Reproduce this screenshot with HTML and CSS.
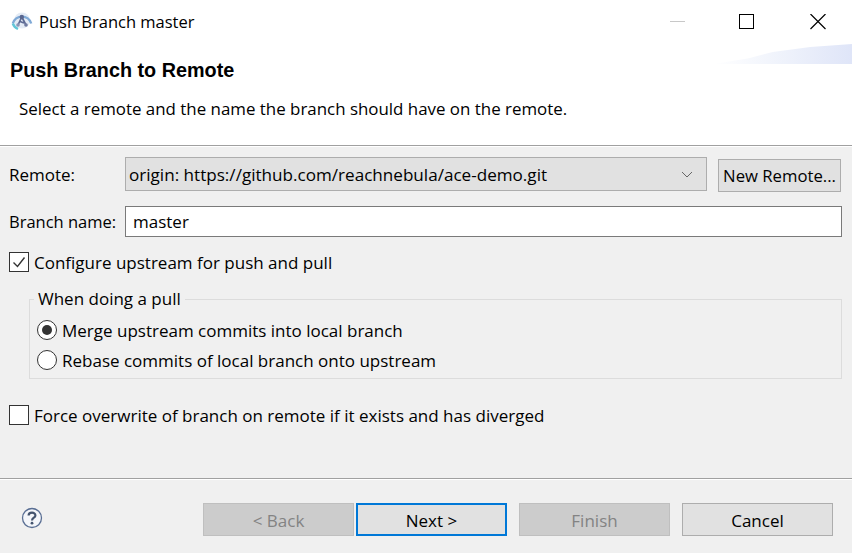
FILE: index.html
```html
<!DOCTYPE html>
<html lang="en">
<head>
<meta charset="utf-8">
<title>Push Branch master</title>
<link rel="stylesheet" href="styles.css">
</head>
<body>
<div class="dialog">
  <div class="top">
    <div class="titlebar">
      <svg class="appicon" width="22" height="22" viewBox="0 0 22 22">
        <circle cx="11" cy="11.5" r="8" fill="#e4ebf5"/>
        <path d="M1.8 14.5 A9.6 9.6 0 0 1 20.2 14.5" fill="none" stroke="#7fa9d6" stroke-width="2.4"/>
        <path d="M1.8 14.5 A9.6 9.6 0 0 0 7 20" fill="none" stroke="#63c6d8" stroke-width="2.4"/>
        <path d="M7 16 L10.8 8 L15 16 M9 12.5 L13 14" fill="none" stroke="#5d6a94" stroke-width="1.7"/>
        <circle cx="10.8" cy="8" r="2.2" fill="#59668f"/>
        <circle cx="7" cy="16" r="1.8" fill="#8a93b4"/>
        <circle cx="15" cy="16" r="1.8" fill="#6f7aa0"/>
      </svg>
      <span class="wintitle">Push Branch master</span>
      <div class="winbtns">
        <svg width="16" height="16" viewBox="0 0 16 16"><path d="M0 7.5H15" stroke="#c8c8c8" stroke-width="1"/></svg>
        <svg width="16" height="16" viewBox="0 0 16 16"><rect x="1.5" y="0.5" width="14" height="14" fill="none" stroke="#000" stroke-width="1"/></svg>
        <svg class="closeicon" width="16" height="16" viewBox="0 0 16 16"><path d="M0.5 0L15.5 15M15.5 0L0.5 15" fill="none" stroke="#000" stroke-width="1.2"/></svg>
      </div>
    </div>
    <div class="banner"></div>
    <h1 class="pagetitle">Push Branch to Remote</h1>
    <p class="desc">Select a remote and the name the branch should have on the remote.</p>
  </div>

  <div class="content">
    <div class="row row-remote">
      <label class="fieldlabel">Remote:</label>
      <div class="combo">
        <span class="combotext">origin: https://github.com/reachnebula/ace-demo.git</span>
        <svg width="12" height="7" viewBox="0 0 12 7"><path d="M1 1L6 6L11 1" fill="none" stroke="#666" stroke-width="1"/></svg>
      </div>
      <button class="btn btn-remote">New Remote...</button>
    </div>
    <div class="row row-branch">
      <label class="fieldlabel branchlabel">Branch name:</label>
      <div class="textinput">master</div>
    </div>
    <div class="check check-upstream">
      <span class="box"><svg width="18" height="18" viewBox="0 0 18 18"><path d="M3.5 9.5L7.5 13.5L14.5 4.5" fill="none" stroke="#333" stroke-width="1.4"/></svg></span>
      <span>Configure upstream for push and pull</span>
    </div>
    <div class="group">
      <span class="legend">When doing a pull</span>
      <div class="radio radio-first"><span class="dot on"></span><span>Merge upstream commits into local branch</span></div>
      <div class="radio"><span class="dot"></span><span>Rebase commits of local branch onto upstream</span></div>
    </div>
    <div class="check check-force">
      <span class="box"></span>
      <span>Force overwrite of branch on remote if it exists and has diverged</span>
    </div>
  </div>

  <div class="footer">
    <svg class="help" width="22" height="22" viewBox="0 0 22 22">
      <circle cx="11" cy="11" r="9.5" fill="#f4f6fa" stroke="#5a6f94" stroke-width="1.3"/>
      <path d="M7.6 8.6C7.6 4.6 14.4 4.6 14.4 8.4C14.4 10.8 11 10.6 11 13.4" fill="none" stroke="#44546f" stroke-width="2.2"/>
      <circle cx="11" cy="16.2" r="1.4" fill="#44546f"/>
    </svg>
    <div class="buttons">
      <button class="btn wiz disabled">&lt; Back</button>
      <button class="btn wiz default">Next &gt;</button>
      <button class="btn wiz disabled finish">Finish</button>
      <button class="btn wiz cancel">Cancel</button>
    </div>
  </div>
</div>
</body>
</html>
```
FILE: styles.css
```css
* { box-sizing: border-box; }
html, body { margin: 0; padding: 0; }
body {
  width: 852px;
  height: 553px;
  overflow: hidden;
  font-family: "Open Sans", "Noto Sans", sans-serif;
  font-size: 17px;
  color: #000;
  background: #f0f0f0;
}
.dialog { width: 852px; height: 553px; display: flex; flex-direction: column; }

.top {
  position: relative;
  height: 147px;
  background: #fff;
  flex: none;
}
.top::after { content: ""; position: absolute; left: 0; right: 0; bottom: 1px; height: 1px; background: #a0a0a0; }
.titlebar { display: flex; align-items: center; height: 44px; padding-left: 11px; }
.appicon { flex: none; margin-top: -4px; }
.wintitle { margin-left: 6px; margin-top: -1px; font-size: 16.5px; }
.winbtns { margin-left: auto; display: flex; gap: 52px; padding-right: 26px; margin-top: -1px; }
.closeicon { margin-left: 4px; }
.banner {
  position: absolute;
  right: 0;
  top: 44px;
  width: 139px;
  height: 20px;
  background: linear-gradient(90deg, #ffffff 0%, #f2f5fc 40%, #dfe5f8 100%);
  clip-path: polygon(0 100%, 25% 72%, 43% 40%, 70% 15%, 100% 0, 100% 100%);
}
.pagetitle {
  margin: 0;
  padding: 13px 0 0 10px;
  font-family: "Liberation Sans", sans-serif;
  font-size: 19.8px;
  line-height: 26px;
  font-weight: 700;
}
.desc { margin: 0; padding: 13px 0 0 19px; line-height: 26px; font-size: 16.9px; }

.content { flex: 1; padding: 10px 10px 0 9px; }
.row { display: flex; align-items: center; }
.row-remote { height: 34px; }
.fieldlabel { width: 116px; flex: none; }
.branchlabel { font-size: 16.5px; }
.combo {
  width: 582px;
  height: 34px;
  display: flex;
  align-items: center;
  justify-content: space-between;
  padding: 0 13px 0 3px;
  background: #e1e1e1;
  border: 1px solid #adadad;
}
.combotext { font-size: 17.1px; }
.btn {
  font: inherit;
  font-size: 16.7px;
  color: #000;
  background: #e1e1e1;
  border: 1px solid #adadad;
  padding: 0;
}
.btn-remote { width: 123px; height: 33px; margin-left: 11px; margin-top: 2px; }
.row-branch { margin-top: 14px; height: 32px; }
.textinput {
  width: 717px;
  height: 31px;
  line-height: 29px;
  padding-left: 7px;
  background: #fff;
  border: 1px solid #7a7a7a;
}
.check { display: flex; align-items: center; height: 20px; gap: 5px; }
.check-upstream { margin-top: 15px; }
.check-force { margin-top: 26px; }
.box {
  width: 20px;
  height: 20px;
  flex: none;
  display: flex;
  align-items: center;
  justify-content: center;
  background: #fff;
  border: 1px solid #333;
}
.group {
  position: relative;
  margin: 27px 0 0 20px;
  height: 80px;
  border: 1px solid #dcdcdc;
  padding: 20px 0 0 7px;
}
.legend {
  position: absolute;
  left: 4px;
  top: -13px;
  padding: 0 4px;
  background: #f0f0f0;
  line-height: 24px;
}
.radio { display: flex; align-items: center; height: 20px; gap: 5px; margin-top: 10px; }
.radio-first { margin-top: 0; }
.dot {
  width: 20px;
  height: 20px;
  flex: none;
  border-radius: 50%;
  border: 1px solid #333;
  background: #fff;
  display: flex;
  align-items: center;
  justify-content: center;
}
.dot.on::before { content: ""; width: 10px; height: 10px; border-radius: 50%; background: #333; }

.footer {
  flex: none;
  height: 75px;
  border-top: 1px solid #a0a0a0;
  box-shadow: inset 0 1px 0 #fff;
  display: flex;
  align-items: flex-start;
  padding: 24px 19px 0 21px;
}
.help { flex: none; margin-top: 4px; }
.buttons { margin-left: auto; display: flex; }
.wiz { width: 151px; height: 33px; margin-left: 2px; padding-top: 2px; font-size: 17px; }
.disabled { background: #cccccc; border-color: #bfbfbf; color: #838383; }
.default { border: 2px solid #0078d7; }
.finish { margin-left: 12px; }
.cancel { margin-left: 12px; }
```
